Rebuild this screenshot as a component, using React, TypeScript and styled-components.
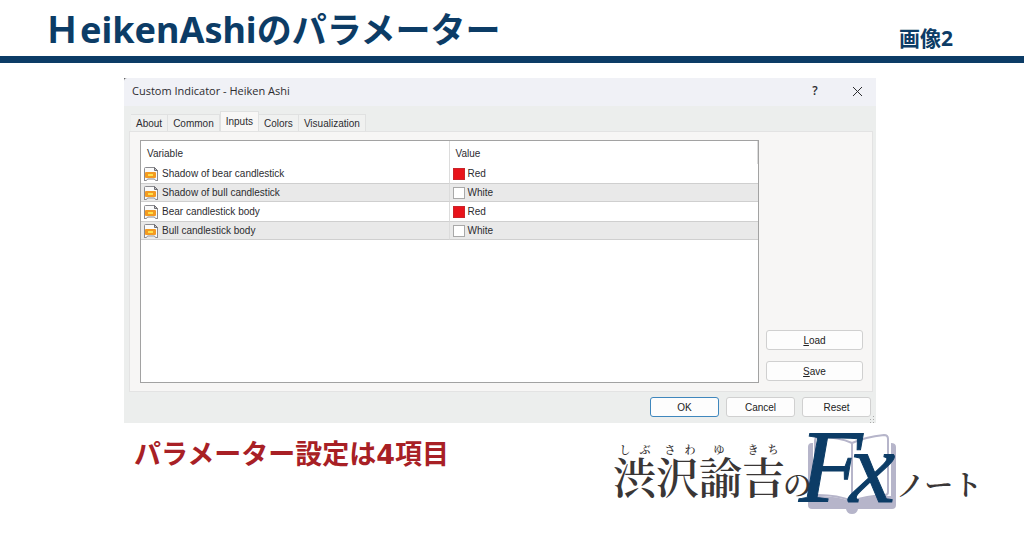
import React, { useState } from 'react';
import styled, { createGlobalStyle } from 'styled-components';

const navy = '#0c3c66';
const jp = '"Noto Sans", "Noto Sans CJK JP", sans-serif';
const ui = '"Liberation Sans", Arial, sans-serif';

const GlobalStyle = createGlobalStyle`
  * { box-sizing: border-box; }
  body { margin: 0; background: #fff; font-family: ${jp}; }
`;

const Header = styled.header`
  display: flex;
  align-items: center;
  justify-content: space-between;
  height: 63px;
  padding: 0 71px 0 44px;
  border-bottom: 7px solid ${navy};
  color: ${navy};
`;

const Title = styled.h1`
  margin: 0;
  padding-top: 4px;
  font-size: 35px;
  line-height: 40px;
  font-weight: 700;
`;

const Latin = styled.span`
  font-size: 36px;
`;

const FigureLabel = styled.span`
  padding-top: 20px;
  font-size: 21px;
  line-height: 24px;
  font-weight: 700;
`;

const Dialog = styled.section`
  margin: 15px 148px 0 124px;
  background: #555;
  font-family: ${ui};
  font-size: 10px;
  color: #2c2c30;
`;

const TitleBar = styled.div`
  display: flex;
  align-items: center;
  height: 28px;
  padding: 0 10px 2px 8px;
  border-top-left-radius: 3px;
  background: #f0f1f6;
`;

const DialogTitle = styled.h2`
  flex: 1;
  margin: 0;
  font: 400 11px/16px "Open Sans", sans-serif;
`;

const TitleButton = styled.button`
  display: flex;
  align-items: center;
  justify-content: center;
  width: 18px;
  height: 18px;
  margin-left: 24px;
  padding: 0;
  border: 0;
  background: none;
  color: #2c2c30;
  font: 600 12px/16px "Open Sans", sans-serif;
`;

const DialogBody = styled.div`
  position: relative;
  padding: 5px 3px 6px 5px;
  background: #eceeed;
`;

const Tabs = styled.div`
  display: flex;
  align-items: flex-end;
  height: 20px;
  padding-left: 2px;
`;

const Tab = styled.button<{ $active: boolean }>`
  height: ${(p) => (p.$active ? 20 : 17)}px;
  padding: ${(p) => (p.$active ? 0 : 2)}px 5px 0;
  border: 1px solid #e0e1e1;
  border-bottom: 0;
  border-left-width: ${(p) => (p.$active ? 1 : 0)}px;
  background: ${(p) => (p.$active ? '#f8f7f6' : '#f0f1f0')};
  color: inherit;
  font: 10px/14px ${ui};
`;

const Panel = styled.div`
  display: flex;
  gap: 7px;
  height: 261px;
  padding: 8px 9px 8px 10px;
  border: 1px solid #e3e3e3;
  background: #f7f6f5;
`;

const ListBox = styled.div`
  flex: 1;
  border: 1px solid #a2a2a2;
  background: #fff;
`;

const Table = styled.table`
  width: 100%;
  border-collapse: separate;
  border-spacing: 0;
  table-layout: fixed;
`;

const HeadCell = styled.th`
  height: 23px;
  padding: 2px 0 0 6px;
  border-right: 1px solid #dcdcdc;
  font-weight: 400;
  text-align: left;
`;

const Row = styled.tr`
  &:nth-child(even) td {
    background: #e9e9e9;
    border-top: 1px solid #cfcfcf;
    border-bottom: 1px solid #cfcfcf;
  }
`;

const Cell = styled.td`
  height: 19px;
  padding: 0 0 0 3px;
  &:first-child { padding-left: 2px; border-right: 1px solid #dcdcdc; }
`;

const CellContent = styled.span`
  display: flex;
  align-items: center;
  gap: 3px;
  line-height: 17px;
`;

const Swatch = styled.span<{ $color: string; $edge: string }>`
  width: 12px;
  height: 12px;
  border: 1px solid ${(p) => p.$edge};
  background: ${(p) => p.$color};
`;

const SideButtons = styled.div`
  display: flex;
  flex-direction: column;
  justify-content: flex-end;
  gap: 11px;
  width: 97px;
  padding-bottom: 2px;
`;

const Actions = styled.div`
  display: flex;
  justify-content: flex-end;
  gap: 7px;
  padding: 5px 2px 0 0;
`;

const Button = styled.button<{ $primary?: boolean }>`
  min-width: 69px;
  height: 20px;
  padding: 1px 0 0;
  border: 1px solid ${(p) => (p.$primary ? '#3f87bd' : '#d0d0d0')};
  border-radius: 3px;
  background: #fdfdfd;
  color: #222;
  font: 10px/16px ${ui};
`;

const Grip = styled.svg`
  position: absolute;
  right: 0;
  bottom: 0;
`;

const Footer = styled.footer`
  display: flex;
  align-items: flex-start;
  justify-content: space-between;
  padding: 0 36px 0 134px;
`;

const Caption = styled.p`
  margin: 0;
  padding-top: 13px;
  color: #a82025;
  font-size: 27px;
  line-height: 36px;
  font-weight: 700;
`;

const Count = styled.span`
  font-family: "DejaVu Sans", sans-serif;
`;

const LogoArt = styled.svg`
  overflow: visible;
`;

const rows = [
  { name: 'Shadow of bear candlestick', value: 'Red' },
  { name: 'Shadow of bull candlestick', value: 'White' },
  { name: 'Bear candlestick body', value: 'Red' },
  { name: 'Bull candlestick body', value: 'White' },
];

const swatches: Record<string, [string, string]> = {
  Red: ['#e8131b', '#c9252b'],
  White: ['#fff', '#a9a9a9'],
};

const ParamIcon = () => (
  <svg width="16" height="16" viewBox="0 0 16 16" aria-hidden="true">
    <path d="M1.5 14V2.5q0-1 1-1H11.5l3 3V14" fill="#fafafa" stroke="#8b8b90" />
    <path d="M11.5 1.5v3h3z" fill="#c8c8cc" stroke="#6f6f75" />
    <path d="M1 14.5h2.5l1-1.5h7l1 1.5H15" fill="none" stroke="#8b8b90" />
    <rect x="2" y="6" width="11" height="6" rx="1" fill="#f39a22" />
    <rect x="5" y="8" width="5" height="2" fill="#ffe24a" />
  </svg>
);

const Logo = () => (
  <LogoArt width="380" height="100" viewBox="608 423 380 100" role="img" aria-label="渋沢諭吉のFxノート">
    <path
      d="M813 443h-1q-4 0-4 4v58q0 4 4 4h34q1 5 6 5t6-5h34q4 0 4-4v-58q0-4-5-4v53q-24-1-39 6q-15-7-39-6z"
      fill="#b6b5ca"
    />
    <g fill="#fff" stroke="#b6b5ca" strokeWidth="2" strokeLinejoin="round">
      <path d="M852 443q-13-6-33-6q-4 0-4 4v51q0 3 3 3q20 0 34 6z" />
      <path d="M852 443q13-6 32-8q4 0 4 4v53q0 3-3 3q-19 1-33 6z" />
    </g>
    <g fill="#3a3636" fontFamily='"Noto Serif CJK JP", "Liberation Serif", serif' fontWeight="600">
      <g fontSize="43">
        <text x="613" y="494">渋沢諭吉</text>
      </g>
      <g fontSize="29">
        <text x="783" y="496">の</text>
        <text x="896" y="496">ノート</text>
      </g>
      <g fontSize="11" textAnchor="middle">
        <text x="625" y="454">し</text>
        <text x="645" y="454">ぶ</text>
        <text x="670" y="454">さ</text>
        <text x="690" y="454">わ</text>
        <text x="719" y="454">ゆ</text>
        <text x="753" y="454">き</text>
        <text x="773" y="454">ち</text>
      </g>
    </g>
    <g fill={navy} stroke={navy} fontFamily='"Liberation Serif", serif' fontStyle="italic" fontSize="104">
      <text x="799" y="502">F</text>
      <text x="849" y="502">x</text>
    </g>
  </LogoArt>
);

export default function App() {
  const [active, setActive] = useState('Inputs');
  return (
    <>
      <GlobalStyle />
      <Header>
        <Title><Latin>ＨeikenAshi</Latin>のパラメーター</Title>
        <FigureLabel>画像2</FigureLabel>
      </Header>
      <main>
        <Dialog role="dialog" aria-labelledby="dialog-title">
          <TitleBar>
            <DialogTitle id="dialog-title">Custom Indicator - Heiken Ashi</DialogTitle>
            <TitleButton aria-label="Help">?</TitleButton>
            <TitleButton aria-label="Close">
              <svg width="11" height="11" viewBox="0 0 11 11" stroke="#2c2c30" aria-hidden="true">
                <path d="M1 1l9 9M10 1l-9 9" />
              </svg>
            </TitleButton>
          </TitleBar>
          <DialogBody>
            <Tabs role="tablist">
              {['About', 'Common', 'Inputs', 'Colors', 'Visualization'].map((t) => (
                <Tab key={t} role="tab" aria-selected={t === active} $active={t === active} onClick={() => setActive(t)}>
                  {t}
                </Tab>
              ))}
            </Tabs>
            <Panel role="tabpanel">
              <ListBox>
                <Table>
                  <thead>
                    <tr>
                      <HeadCell>Variable</HeadCell>
                      <HeadCell>Value</HeadCell>
                    </tr>
                  </thead>
                  <tbody>
                    {rows.map((r) => (
                      <Row key={r.name}>
                        <Cell><CellContent><ParamIcon />{r.name}</CellContent></Cell>
                        <Cell>
                          <CellContent>
                            <Swatch $color={swatches[r.value][0]} $edge={swatches[r.value][1]} />
                            {r.value}
                          </CellContent>
                        </Cell>
                      </Row>
                    ))}
                  </tbody>
                </Table>
              </ListBox>
              <SideButtons>
                <Button><u>L</u>oad</Button>
                <Button><u>S</u>ave</Button>
              </SideButtons>
            </Panel>
            <Actions>
              <Button $primary>OK</Button>
              <Button>Cancel</Button>
              <Button>Reset</Button>
            </Actions>
            <Grip width="8" height="8" viewBox="0 0 8 8" fill="#aaa" aria-hidden="true">
              <path d="M5 1h1v1h-1zM5 4h1v1h-1zM2 4h1v1h-1zM5 7h1v1h-1zM2 7h1v1h-1z" />
            </Grip>
          </DialogBody>
        </Dialog>
      </main>
      <Footer>
        <Caption>パラメーター設定は<Count>4</Count>項目</Caption>
        <Logo />
      </Footer>
    </>
  );
}
